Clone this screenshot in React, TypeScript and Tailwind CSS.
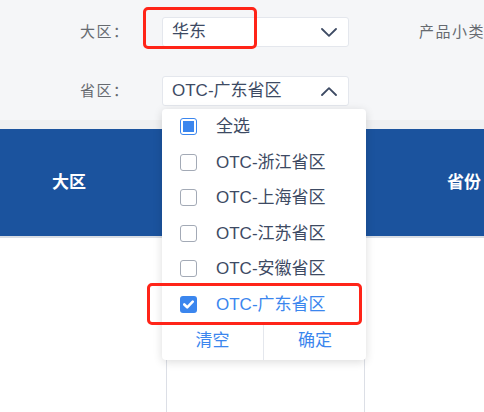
const provinces = [
  { name: 'OTC-浙江省区', checked: false },
  { name: 'OTC-上海省区', checked: false },
  { name: 'OTC-江苏省区', checked: false },
  { name: 'OTC-安徽省区', checked: false },
  { name: 'OTC-广东省区', checked: true },
];

const font = "font-['Liberation_Sans','Noto_Sans_CJK_SC',sans-serif]";

function Checkbox({ state }: { state: 'off' | 'on' | 'some' }) {
  if (state === 'on') {
    return (
      <span className="w-[17px] h-[17px] rounded-[3px] bg-[#3b86ee] flex items-center justify-center">
        <svg width="11" height="9" viewBox="0 0 11 9" fill="none">
          <path d="M1.3 4.5 L4.2 7.3 L9.7 1.7" stroke="white" strokeWidth="2.6" strokeLinecap="round" strokeLinejoin="round" />
        </svg>
      </span>
    );
  }
  if (state === 'some') {
    return (
      <span className="w-[17px] h-[17px] rounded-[3px] border border-[#3b86ee] bg-white flex items-center justify-center">
        <span className="w-[11px] h-[11px] bg-[#3b86ee]" />
      </span>
    );
  }
  return <span className="w-[17px] h-[17px] rounded-[3px] border border-[#a3aab6] bg-white" />;
}

function Chevron({ up }: { up?: boolean }) {
  return (
    <svg width="16" height="9" viewBox="0 0 16 9" fill="none" className="text-[#3d4a63]">
      <path
        d={up ? 'M1 8 L8 1.2 L15 8' : 'M1 1 L8 7.8 L15 1'}
        stroke="currentColor"
        strokeWidth="1.8"
        strokeLinecap="round"
        strokeLinejoin="round"
      />
    </svg>
  );
}

function FilterRow({ label, value, open }: { label: string; value: string; open?: boolean }) {
  return (
    <div className="flex items-center h-[30px]">
      <span className="w-[82px] text-[15px] tracking-[1.5px] text-[#666a70]">{label}</span>
      <div className="w-[187px] h-[30px] bg-white border border-[#e4e7ed] rounded-[3px] flex items-center justify-between pl-[9px] pr-[11px]">
        <span className="text-[17px] text-[#3d4a63]">{value}</span>
        <Chevron up={open} />
      </div>
    </div>
  );
}

export default function App() {
  return (
    <div className={`relative w-[484px] h-[412px] overflow-hidden bg-white ${font}`}>
      <div className="h-[120px] bg-[#f5f6f8] pl-[80px] pt-[17px] flex flex-col gap-[29px]">
        <div className="flex items-center">
          <FilterRow label="大区：" value="华东" />
          <span className="ml-[70px] text-[15px] tracking-[1.5px] text-[#666a70] whitespace-nowrap">产品小类</span>
        </div>
        <FilterRow label="省区：" value="OTC-广东省区" open />
      </div>
      <div className="h-[9px] bg-[#eff0f2]" />

      <div className="grid grid-cols-[167px_198px_1fr] h-[107px] bg-[#1b539e] text-white font-bold text-[17px]">
        <div className="flex items-center pl-[52px]">大区</div>
        <div />
        <div className="flex items-center pl-[82px] whitespace-nowrap">省份</div>
      </div>
      <div className="h-[2px] bg-[#d9dde4]" />
      <div className="grid grid-cols-[167px_198px_1fr] h-[200px]">
        <div className="border-r border-[#dcdfe6]" />
        <div className="border-r border-[#dcdfe6]" />
        <div />
      </div>

      <div className="absolute left-[162px] top-[109px] w-[204px] bg-white rounded-[4px] shadow-[0_2px_10px_rgba(0,0,0,0.14)]">
        <div className="flex items-center h-[35.5px] pl-[18px] gap-[19px]">
          <Checkbox state="some" />
          <span className="text-[17px] text-[#3d4a63]">全选</span>
        </div>
        {provinces.map((p) => (
          <div key={p.name} className="flex items-center h-[35.5px] pl-[18px] gap-[19px]">
            <Checkbox state={p.checked ? 'on' : 'off'} />
            <span className={`text-[17px] ${p.checked ? 'text-[#3b86ee]' : 'text-[#3d4a63]'}`}>{p.name}</span>
          </div>
        ))}
        <div className="grid grid-cols-2 h-[38px] text-[17px] text-[#3b86ee]">
          <div className="flex items-center justify-center border-r border-[#e4e7ed]">清空</div>
          <div className="flex items-center justify-center">确定</div>
        </div>
      </div>

      <div className="absolute left-[143px] top-[7px] w-[114px] h-[42px] border-[3px] border-[#ff2418] rounded-[5px]" />
      <div className="absolute left-[147px] top-[283px] w-[215px] h-[42px] border-[3px] border-[#ff2418] rounded-[5px]" />
    </div>
  );
}
